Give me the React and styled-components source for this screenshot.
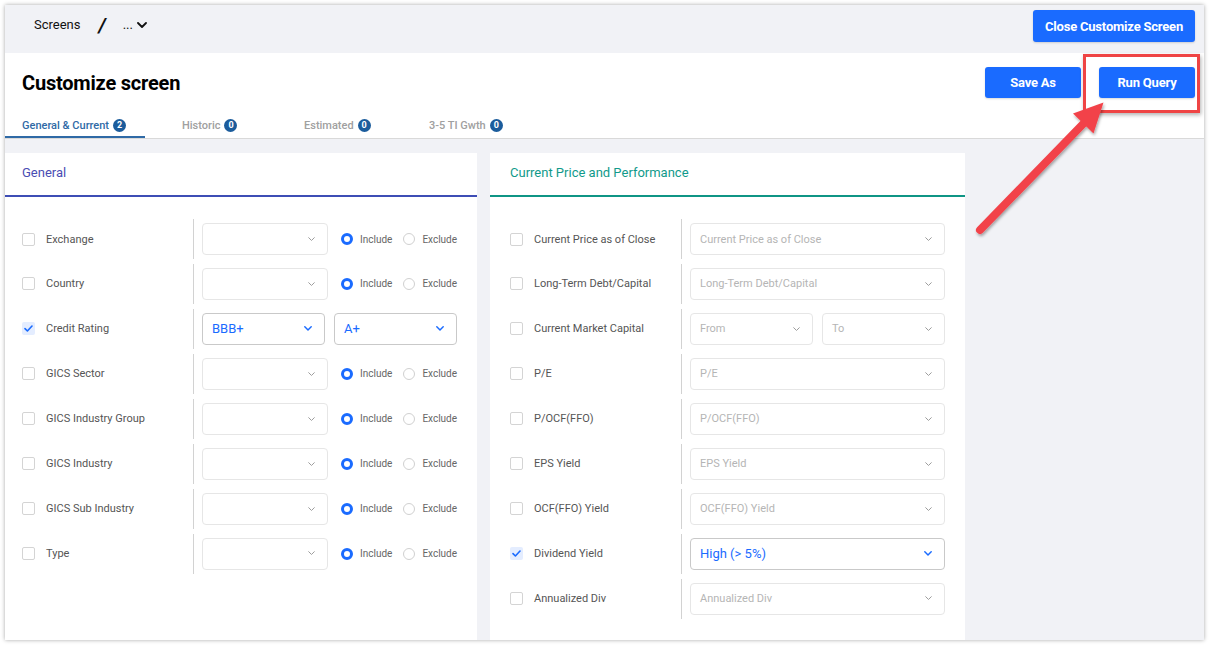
import React from 'react';
import styled, { createGlobalStyle } from 'styled-components';

const Global = createGlobalStyle`
  html, body { margin: 0; padding: 0; background: #ffffff; }
  body { font-family: Roboto, "Noto Sans", "Liberation Sans", Arial, sans-serif; }
  #root { padding: 5px 6px 6px 5px; }
  * { box-sizing: border-box; }
`;

const Frame = styled.div`
  position: relative;
  width: 1199px;
  height: 635px;
  background: #f1f2f6;
  box-shadow: 0 0 4px rgba(0, 0, 0, 0.35);
  overflow: hidden;
  display: flex;
  flex-direction: column;
`;

const TopBar = styled.div`
  height: 48px;
  flex: none;
  display: flex;
  align-items: flex-start;
  justify-content: space-between;
  padding: 5px 9px 0 29px;
`;

const Crumbs = styled.div`
  display: flex;
  align-items: center;
  height: 29px;
  color: #111;
  font-size: 13px;
`;

const Slash = styled.span`
  font-size: 20px;
  font-weight: 700;
  font-style: italic;
  margin: 0 17px 0 18px;
  line-height: 1;
`;

const More = styled.span`
  display: flex;
  align-items: center;
  gap: 4px;
  font-size: 13px;
`;

const Button = styled.button`
  border: none;
  border-radius: 3px;
  background: #1a6bff;
  color: #fff;
  font-family: inherit;
  font-weight: 700;
  font-size: 13px;
  letter-spacing: -0.2px;
  height: ${p => p.h || 32}px;
  width: ${p => p.w}px;
  padding: 0;
  box-shadow: 0 1px 2px rgba(0, 0, 0, 0.15);
`;

const WhiteSection = styled.div`
  background: #fff;
  border-bottom: 1px solid #d9d9d9;
  flex: none;
`;

const TitleRow = styled.div`
  height: 59px;
  display: flex;
  align-items: center;
  justify-content: space-between;
  padding: 0 9px 0 17px;
`;

const Title = styled.h1`
  margin: 0;
  font-size: 20px;
  font-weight: 700;
  color: #000;
  letter-spacing: -0.2px;
`;

const Actions = styled.div`
  display: flex;
  gap: 18px;
`;

const Tabs = styled.div`
  height: 26px;
  display: flex;
`;

const Tab = styled.div`
  width: ${p => p.w}px;
  padding-left: ${p => p.pl}px;
  display: flex;
  align-items: center;
  gap: 4px;
  font-size: 11px;
  font-weight: 500;
  color: ${p => (p.active ? '#2f6aa6' : '#a0a0a0')};
  border-bottom: 2px solid ${p => (p.active ? '#2f6aa6' : 'transparent')};
  padding-top: 2px;
`;

const Badge = styled.span`
  width: 13px;
  height: 13px;
  border-radius: 50%;
  background: #1b5c9c;
  color: #fff;
  font-size: 9px;
  font-weight: 700;
  display: inline-flex;
  align-items: center;
  justify-content: center;
`;

const Content = styled.div`
  flex: 1;
  display: flex;
  gap: 13px;
  padding-top: 14px;
  min-height: 0;
`;

const Panel = styled.div`
  width: ${p => p.w}px;
  background: #fff;
  flex: none;
`;

const PanelHeader = styled.div`
  height: 44px;
  padding-left: ${p => p.pl}px;
  display: flex;
  align-items: center;
  font-size: 13px;
  font-weight: 400;
  color: ${p => p.color};
  border-bottom: 2px solid ${p => p.line};
  padding-bottom: 4px;
`;

const PanelBody = styled.div`
  padding: 22px 20px 0 ${p => p.pl}px;
  display: flex;
  flex-direction: column;
  gap: 4.95px;
`;

const Row = styled.div`
  height: 40px;
  display: flex;
  align-items: center;
`;

const LabelCell = styled.div`
  width: 171px;
  flex: none;
  display: flex;
  align-items: center;
  gap: 11px;
  font-size: 11px;
  color: #555;
  height: 100%;
`;

const Check = styled.span`
  width: 13px;
  height: 13px;
  border-radius: 2px;
  flex: none;
  border: ${p => (p.checked ? 'none' : '1px solid #d4d4d4')};
  background: ${p => (p.checked ? '#e4edff' : '#fff')};
  display: inline-flex;
  align-items: center;
  justify-content: center;
`;

const Divider = styled.div`
  width: 1px;
  flex: none;
  height: 40px;
  background: #d2d2d2;
  margin-right: 8px;
`;

const Controls = styled.div`
  display: flex;
  align-items: center;
  gap: 9px;
  flex: none;
`;

const Select = styled.div`
  width: ${p => p.w}px;
  flex: none;
  height: 32px;
  border-radius: 4px;
  border: 1px solid ${p => (p.value ? '#c9c9c9' : '#e6e6e6')};
  display: flex;
  align-items: center;
  justify-content: space-between;
  padding: 0 12px 0 9px;
  font-size: ${p => (p.value ? '13px' : '11px')};
  color: ${p => (p.value ? '#1a6bff' : '#b5b5b5')};
`;

const Radios = styled.div`
  display: flex;
  align-items: center;
  margin-left: 4px;
  font-size: 10px;
  color: #666;
`;

const RadioItem = styled.span`
  display: inline-flex;
  align-items: center;
  gap: 7px;
  margin-right: 11px;
`;

const Radio = styled.span`
  width: 12px;
  height: 12px;
  border-radius: 50%;
  border: ${p => (p.on ? '3px solid #1a6bff' : '1px solid #d0d0d0')};
  background: #fff;
  flex: none;
`;

const Callout = styled.div`
  position: absolute;
  left: 1078px;
  top: 49px;
  width: 117px;
  height: 59px;
  border: 3px solid #ef4444;
  box-shadow: 1px 2px 4px rgba(0, 0, 0, 0.3);
  pointer-events: none;
`;

const Overlay = styled.svg`
  position: absolute;
  left: 0;
  top: 0;
  width: 1199px;
  height: 635px;
  pointer-events: none;
`;

const Chevron = ({ color = '#9a9a9a', w = 7, sw = 1 }) => (
  <svg width={w} height={w * 0.6} viewBox="0 0 10 6" fill="none">
    <path d="M1 1 L5 5 L9 1" stroke={color} strokeWidth={sw * 1.4} strokeLinecap="round" strokeLinejoin="round" />
  </svg>
);

const Tick = () => (
  <svg width="9" height="7" viewBox="0 0 9 7" fill="none">
    <path d="M1 3.6 L3.4 6 L8 1" stroke="#1a6bff" strokeWidth="1.6" strokeLinecap="round" strokeLinejoin="round" />
  </svg>
);

const left = [
  { label: 'Exchange' },
  { label: 'Country' },
  { label: 'Credit Rating', checked: true, pair: ['BBB+', 'A+'] },
  { label: 'GICS Sector' },
  { label: 'GICS Industry Group' },
  { label: 'GICS Industry' },
  { label: 'GICS Sub Industry' },
  { label: 'Type' },
];

const right = [
  { label: 'Current Price as of Close', ph: 'Current Price as of Close' },
  { label: 'Long-Term Debt/Capital', ph: 'Long-Term Debt/Capital' },
  { label: 'Current Market Capital', range: ['From', 'To'] },
  { label: 'P/E', ph: 'P/E' },
  { label: 'P/OCF(FFO)', ph: 'P/OCF(FFO)' },
  { label: 'EPS Yield', ph: 'EPS Yield' },
  { label: 'OCF(FFO) Yield', ph: 'OCF(FFO) Yield' },
  { label: 'Dividend Yield', checked: true, value: 'High (> 5%)' },
  { label: 'Annualized Div', ph: 'Annualized Div' },
];

const Label = ({ checked, children }) => (
  <LabelCell>
    <Check checked={checked}>{checked && <Tick />}</Check>
    {children}
  </LabelCell>
);

export default function App() {
  return (
    <>
      <Global />
      <Frame>
        <TopBar>
          <Crumbs>
            Screens
            <Slash>/</Slash>
            <More>
              ...
              <Chevron color="#111" w={10} sw={1.3} />
            </More>
          </Crumbs>
          <Button w={162} h={32}>Close Customize Screen</Button>
        </TopBar>
        <WhiteSection>
          <TitleRow>
            <Title>Customize screen</Title>
            <Actions>
              <Button w={96} h={31}>Save As</Button>
              <Button w={96} h={31}>Run Query</Button>
            </Actions>
          </TitleRow>
          <Tabs>
            <Tab active w={140} pl={17}>General &amp; Current <Badge>2</Badge></Tab>
            <Tab w={122} pl={37}>Historic <Badge>0</Badge></Tab>
            <Tab w={125} pl={37}>Estimated <Badge>0</Badge></Tab>
            <Tab w={130} pl={37}>3-5 TI Gwth <Badge>0</Badge></Tab>
          </Tabs>
        </WhiteSection>
        <Content>
          <Panel w={472}>
            <PanelHeader pl={17} color="#4a4db3" line="#3e4db5">General</PanelHeader>
            <PanelBody pl={17}>
              {left.map(r => (
                <Row key={r.label}>
                  <Label checked={r.checked}>{r.label}</Label>
                  <Divider />
                  {r.pair ? (
                    <Controls>
                      {r.pair.map(v => (
                        <Select key={v} w={123} value>
                          {v}
                          <Chevron color="#1a6bff" w={8} sw={1.3} />
                        </Select>
                      ))}
                    </Controls>
                  ) : (
                    <Controls>
                      <Select w={126}>
                        <span />
                        <Chevron />
                      </Select>
                      <Radios>
                        <RadioItem><Radio on />Include</RadioItem>
                        <RadioItem><Radio />Exclude</RadioItem>
                      </Radios>
                    </Controls>
                  )}
                </Row>
              ))}
            </PanelBody>
          </Panel>
          <Panel w={475}>
            <PanelHeader pl={20} color="#119a8b" line="#0f9585">Current Price and Performance</PanelHeader>
            <PanelBody pl={20}>
              {right.map(r => (
                <Row key={r.label}>
                  <Label checked={r.checked}>{r.label}</Label>
                  <Divider />
                  <Controls>
                    {r.range ? (
                      r.range.map(v => (
                        <Select key={v} w={123}>
                          {v}
                          <Chevron />
                        </Select>
                      ))
                    ) : r.value ? (
                      <Select w={255} value>
                        {r.value}
                        <Chevron color="#1a6bff" w={8} sw={1.3} />
                      </Select>
                    ) : (
                      <Select w={255}>
                        {r.ph}
                        <Chevron />
                      </Select>
                    )}
                  </Controls>
                </Row>
              ))}
            </PanelBody>
          </Panel>
        </Content>
        <Callout />
        <Overlay viewBox="0 0 1199 635">
          <defs>
            <filter id="sh" x="-20%" y="-20%" width="140%" height="140%">
              <feDropShadow dx="1" dy="2" stdDeviation="1.6" floodColor="#000" floodOpacity="0.35" />
            </filter>
          </defs>
          <g filter="url(#sh)">
            <line x1="975" y1="225" x2="1080" y2="117" stroke="#f2434a" strokeWidth="8" strokeLinecap="round" />
            <polygon points="1098.5,97.5 1068,108.5 1088.5,128.5" fill="#f2434a" />
          </g>
        </Overlay>
      </Frame>
    </>
  );
}
